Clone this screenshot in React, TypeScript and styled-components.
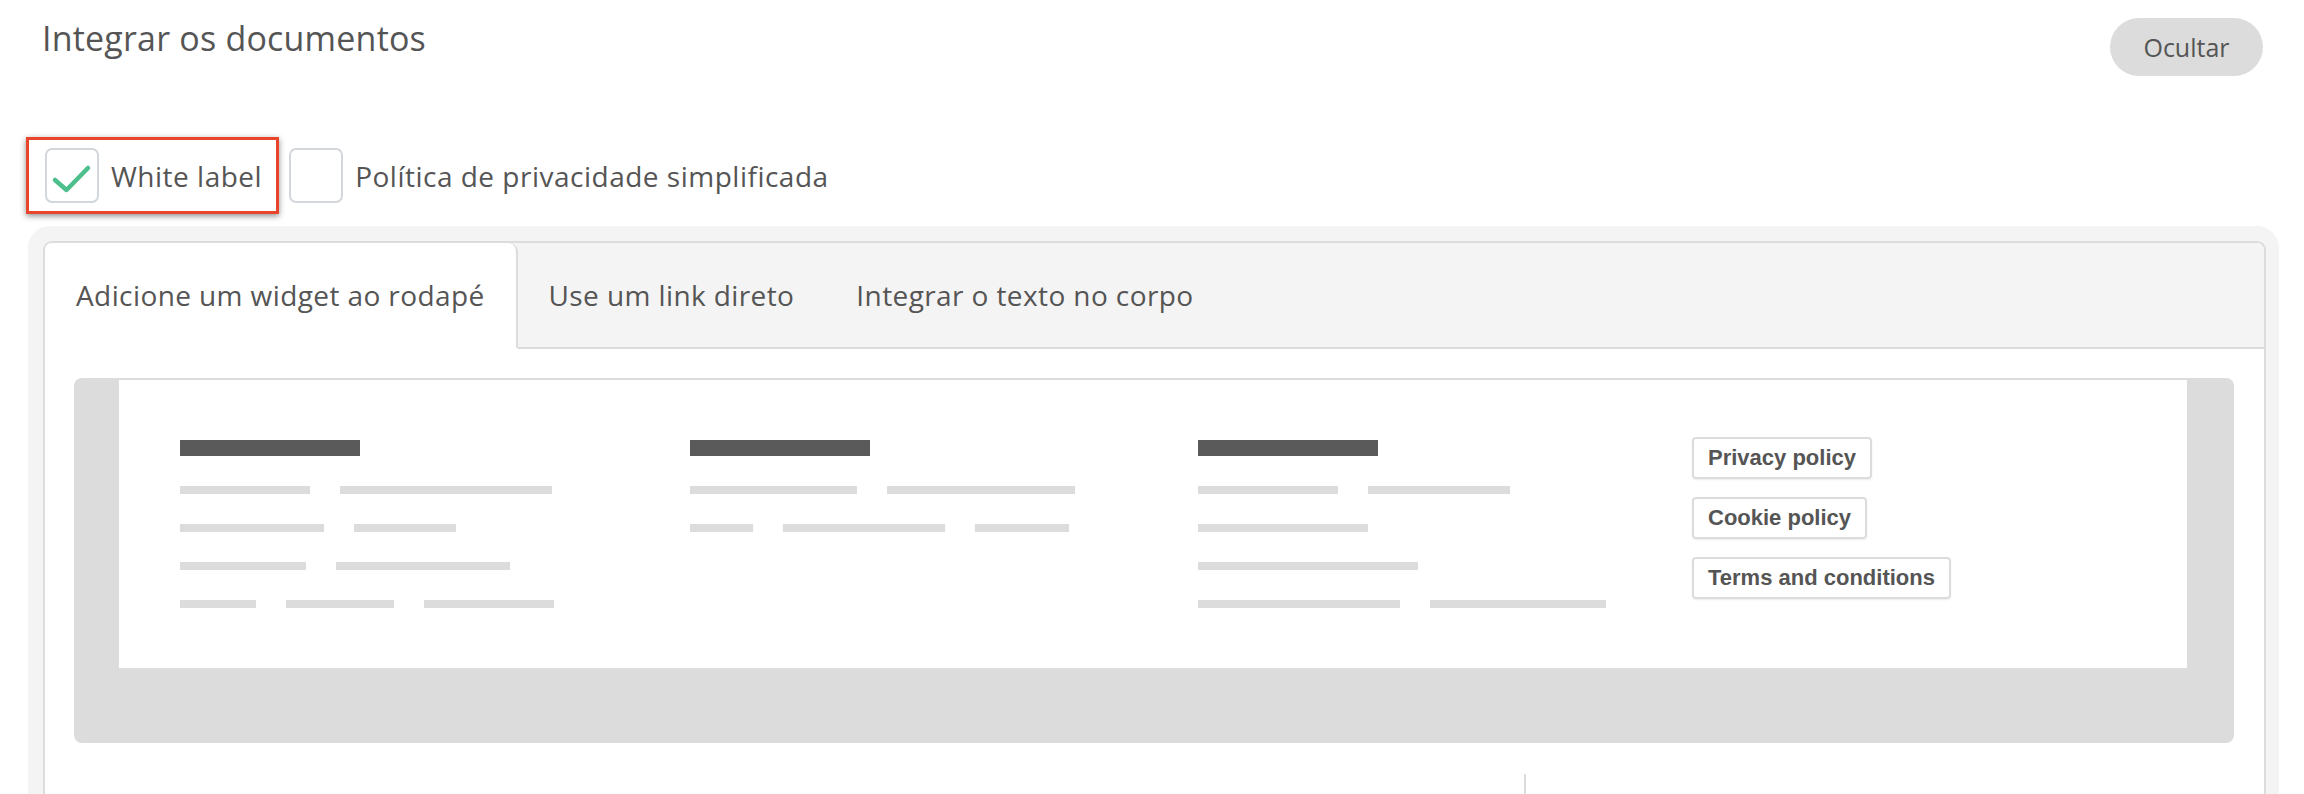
import React, { FC, useState } from 'react';
import styled, { createGlobalStyle } from 'styled-components';

type TabKey = 'widget' | 'link' | 'body';

const tabs: { key: TabKey; label: string }[] = [
    { key: 'widget', label: 'Adicione um widget ao rodapé' },
    { key: 'link', label: 'Use um link direto' },
    { key: 'body', label: 'Integrar o texto no corpo' },
];

// placeholder footer columns: bar widths per row
const footerColumns: number[][][] = [
    [[130, 212], [144, 102], [126, 174], [76, 108, 130]],
    [[167, 188], [63, 162, 94]],
    [[140, 142], [170], [220], [202, 176]],
];

const policyLinks = ['Privacy policy', 'Cookie policy', 'Terms and conditions'];

const CheckMark: FC = () => (
    <svg width="54" height="55" viewBox="0 0 54 55">
        <path d="M10 32 L21.5 42 L43 20" fill="none" stroke="#4dbf8c" strokeWidth="4.5" strokeLinecap="round" strokeLinejoin="round" />
    </svg>
);

const App: FC = () => {
    const [whiteLabel, setWhiteLabel] = useState(true);
    const [simplified, setSimplified] = useState(false);
    const [activeTab, setActiveTab] = useState<TabKey>('widget');

    return (
        <Page>
            <GlobalStyle />
            <Header>
                <Title>Integrar os documentos</Title>
                <HideButton>Ocultar</HideButton>
            </Header>

            <Options>
                <Option $highlighted onClick={() => setWhiteLabel(v => !v)}>
                    <CheckBox>{whiteLabel && <CheckMark />}</CheckBox>
                    <OptionLabel>White label</OptionLabel>
                </Option>
                <Option onClick={() => setSimplified(v => !v)}>
                    <CheckBox>{simplified && <CheckMark />}</CheckBox>
                    <OptionLabel>Política de privacidade simplificada</OptionLabel>
                </Option>
            </Options>

            <Panel>
                <TabsBox>
                    <TabBar>
                        {tabs.map(t => (
                            <Tab key={t.key} $active={t.key === activeTab} onClick={() => setActiveTab(t.key)}>
                                {t.label}
                            </Tab>
                        ))}
                        <TabFiller />
                    </TabBar>
                    <TabContent>
                        <Preview>
                            <FooterMock>
                                {footerColumns.map((rows, i) => (
                                    <FooterColumn key={i}>
                                        <HeadingBar />
                                        {rows.map((bars, j) => (
                                            <BarRow key={j}>
                                                {bars.map((w, k) => (
                                                    <Bar key={k} style={{ width: w }} />
                                                ))}
                                            </BarRow>
                                        ))}
                                    </FooterColumn>
                                ))}
                                <LinkColumn>
                                    {policyLinks.map(l => (
                                        <PolicyLink key={l}>{l}</PolicyLink>
                                    ))}
                                </LinkColumn>
                            </FooterMock>
                        </Preview>
                        <Split>
                            <SplitSide />
                            <SplitSide $divider />
                        </Split>
                    </TabContent>
                </TabsBox>
            </Panel>
        </Page>
    );
};

export default App;

// Styled Components
const GlobalStyle = createGlobalStyle`
  html, body {
    margin: 0;
    padding: 0;
    overflow: hidden;
    background: #fff;
  }
  body {
    font-family: "Open Sans", "Noto Sans", sans-serif;
    color: #555;
  }
`;

const Page = styled.div`
  padding: 0 25px 0 28px;
`;

const Header = styled.div`
  display: flex;
  justify-content: space-between;
  align-items: flex-start;
  padding: 0 16px 0 14px;
`;

const Title = styled.h1`
  margin: 15px 0 0;
  font-size: 34px;
  line-height: 46px;
  font-weight: 400;
  letter-spacing: 0.2px;
  color: #555;
`;

const HideButton = styled.button`
  margin-top: 18px;
  width: 153px;
  height: 58px;
  border: none;
  border-radius: 29px;
  background: #dcdcdc;
  color: #555;
  font-family: "Open Sans", sans-serif;
  font-size: 25px;
  cursor: pointer;
`;

const Options = styled.div`
  display: flex;
  align-items: center;
  gap: 10px;
  margin: 61px 0 0 -2px;
`;

const Option = styled.label<{ $highlighted?: boolean }>`
  display: flex;
  align-items: center;
  gap: 12px;
  cursor: pointer;
  ${p => p.$highlighted && `
    padding: 8px 14px 8px 16px;
    border: 3px solid #e8452c;
    box-shadow: 0 2px 6px rgba(0, 0, 0, 0.45);
  `}
`;

const CheckBox = styled.span`
  box-sizing: border-box;
  width: 54px;
  height: 55px;
  border: 2px solid #d3d7dc;
  border-radius: 7px;
  display: flex;
  svg {
    margin: -2px;
  }
`;

const OptionLabel = styled.span`
  font-size: 28px;
  letter-spacing: 0.5px;
  color: #555;
`;

const Panel = styled.div`
  margin-top: 12px;
  background: #f4f4f4;
  border-radius: 22px;
  padding: 15px 13px 0 15px;
`;

const TabsBox = styled.div`
  border: 2px solid #dcdcdc;
  border-bottom: none;
  border-radius: 9px 9px 0 0;
  background: #fff;
  overflow: hidden;
`;

const TabBar = styled.div`
  display: flex;
  height: 106px;
  background: #f4f4f4;
`;

const Tab = styled.div<{ $active?: boolean }>`
  display: flex;
  align-items: center;
  padding: 0 31px;
  font-size: 28px;
  letter-spacing: 0.4px;
  color: #555;
  cursor: pointer;
  border-bottom: 2px solid ${p => (p.$active ? 'transparent' : '#dcdcdc')};
  ${p => p.$active && `
    background: #fff;
    border-right: 2px solid #dcdcdc;
    border-top-right-radius: 9px;
  `}
`;

const TabFiller = styled.div`
  flex: 1;
  border-bottom: 2px solid #dcdcdc;
`;

const TabContent = styled.div`
  padding: 29px 30px 0 29px;
`;

const Preview = styled.div`
  background: #dcdcdc;
  border-radius: 8px;
  padding: 2px 47px 75px 45px;
`;

const FooterMock = styled.div`
  background: #fff;
  height: 288px;
  box-sizing: border-box;
  padding: 60px 0 0 61px;
  display: grid;
  grid-template-columns: 510px 508px 494px 1fr;
  align-items: start;
`;

const FooterColumn = styled.div`
  display: flex;
  flex-direction: column;
  gap: 30px;
`;

const HeadingBar = styled.div`
  width: 180px;
  height: 16px;
  background: #5a5a5a;
`;

const BarRow = styled.div`
  display: flex;
  gap: 30px;
`;

const Bar = styled.div`
  height: 8px;
  background: #dcdcdc;
`;

const LinkColumn = styled.div`
  display: flex;
  flex-direction: column;
  align-items: flex-start;
  gap: 18px;
  margin-top: -3px;
`;

const PolicyLink = styled.span`
  box-sizing: border-box;
  height: 42px;
  display: flex;
  align-items: center;
  padding: 0 14px;
  border: 2px solid #dcdcdc;
  border-radius: 4px;
  box-shadow: 0 1px 2px rgba(0, 0, 0, 0.08);
  font-family: "Liberation Sans", Arial, sans-serif;
  font-weight: 700;
  font-size: 22px;
  color: #555;
`;

const Split = styled.div`
  display: flex;
  margin-top: 31px;
  height: 120px;
`;

const SplitSide = styled.div<{ $divider?: boolean }>`
  flex: ${p => (p.$divider ? '0 0 708px' : '1')};
  border-left: ${p => (p.$divider ? '2px solid #dcdcdc' : 'none')};
`;
